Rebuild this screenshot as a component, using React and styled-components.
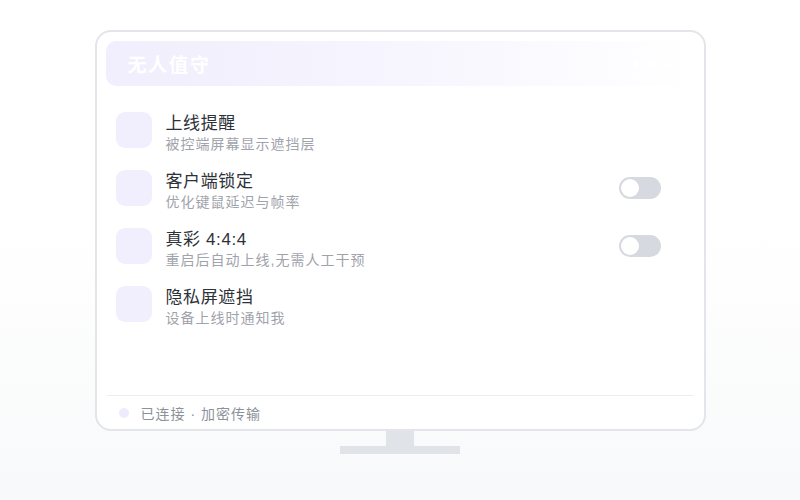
import styled, { createGlobalStyle } from 'styled-components';

const GlobalStyle = createGlobalStyle`
  html, body {
    margin: 0;
    padding: 0;
  }

  body {
    background: linear-gradient(180deg, #ffffff 0%, #ffffff 45%, #f8f9fa 100%);
    font-family: 'Liberation Sans', 'Noto Sans CJK SC', sans-serif;
    height: 500px;
    overflow: hidden;
  }
`;

const Stage = styled.div`
  align-items: center;
  display: flex;
  flex-direction: column;
  padding-top: 30px;
`;

const Monitor = styled.div`
  background: #ffffff;
  border: 2px solid #e3e5ea;
  border-radius: 16px;
  box-sizing: border-box;
  display: flex;
  flex-direction: column;
  height: 401px;
  padding: 9px 9px 0;
  width: 611px;
`;

const Header = styled.div`
  align-items: center;
  background: linear-gradient(90deg, #f1eefd 0%, #f6f4fe 45%, rgba(255, 255, 255, 0) 100%);
  border-radius: 10px;
  display: flex;
  flex: none;
  height: 45px;
  justify-content: space-between;
  padding: 0 26px 0 22px;
`;

const HeaderTitle = styled.div`
  color: #ffffff;
  font-size: 19px;
  font-weight: 700;
  letter-spacing: 1.8px;
`;

const Dots = styled.div`
  display: flex;
  gap: 9px;
`;

const Dot = styled.span`
  background: #ffffff;
  border-radius: 50%;
  height: 6px;
  width: 6px;
`;

const List = styled.div`
  display: flex;
  flex: 1;
  flex-direction: column;
  padding-top: 15px;
`;

const Row = styled.div`
  align-items: center;
  display: flex;
  height: 58px;
  padding: 0 34px 0 10px;
`;

const IconTile = styled.div`
  background: #f1effd;
  border-radius: 9px;
  flex: none;
  height: 36px;
  width: 36px;
`;

const TextBlock = styled.div`
  display: flex;
  flex: 1;
  flex-direction: column;
  margin-left: 14px;
  margin-top: 6px;
`;

const RowTitle = styled.div`
  color: #2d3138;
  font-size: 17px;
  letter-spacing: 0.6px;
  line-height: 21px;
`;

const RowSub = styled.div`
  color: #9fa3ab;
  font-size: 14px;
  letter-spacing: 1px;
  line-height: 20px;
`;

const Toggle = styled.div`
  background: #d6d9df;
  border-radius: 11px;
  box-sizing: border-box;
  flex: none;
  height: 22px;
  padding: 2px;
  width: 42px;
`;

const Knob = styled.div`
  background: #ffffff;
  border-radius: 50%;
  height: 18px;
  width: 18px;
`;

const Divider = styled.div`
  background: #eceef2;
  flex: none;
  height: 1px;
  margin: 0 1px;
`;

const Footer = styled.div`
  align-items: center;
  display: flex;
  flex: none;
  gap: 12px;
  height: 33px;
  padding-left: 13px;
`;

const StatusDot = styled.span`
  background: #efebfc;
  border-radius: 50%;
  height: 10px;
  width: 10px;
`;

const FooterText = styled.span`
  color: #8d929a;
  font-size: 14px;
  letter-spacing: 1px;
`;

const Neck = styled.div`
  background: #e0e3e8;
  height: 15px;
  width: 28px;
`;

const Base = styled.div`
  background: #e0e3e8;
  height: 8px;
  width: 120px;
`;

const rows = [
  { title: '上线提醒', sub: '被控端屏幕显示遮挡层', toggle: false },
  { title: '客户端锁定', sub: '优化键鼠延迟与帧率', toggle: true },
  { title: '真彩 4:4:4', sub: '重启后自动上线,无需人工干预', toggle: true },
  { title: '隐私屏遮挡', sub: '设备上线时通知我', toggle: false },
];

export default function App() {
  return (
    <>
      <GlobalStyle />
      <Stage>
        <Monitor>
          <Header>
            <HeaderTitle>无人值守</HeaderTitle>
            <Dots>
              <Dot />
              <Dot />
              <Dot />
            </Dots>
          </Header>
          <List>
            {rows.map((row) => (
              <Row key={row.title}>
                <IconTile />
                <TextBlock>
                  <RowTitle>{row.title}</RowTitle>
                  <RowSub>{row.sub}</RowSub>
                </TextBlock>
                {row.toggle && (
                  <Toggle>
                    <Knob />
                  </Toggle>
                )}
              </Row>
            ))}
          </List>
          <Divider />
          <Footer>
            <StatusDot />
            <FooterText>已连接 · 加密传输</FooterText>
          </Footer>
        </Monitor>
        <Neck />
        <Base />
      </Stage>
    </>
  );
}
